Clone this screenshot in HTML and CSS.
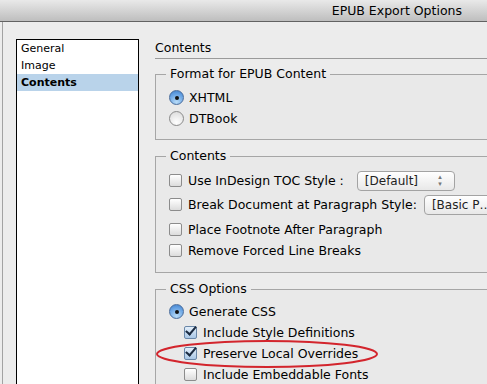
FILE: index.html
```html
<!DOCTYPE html>
<html lang="en">
<head>
  <meta charset="UTF-8">
  <title>EPUB Export Options</title>
  <link rel="stylesheet" href="styles.css">
</head>
<body>
  <div class="titlebar">EPUB Export Options</div>
  <div class="window">
    <ul class="sidebar">
      <li>General</li>
      <li>Image</li>
      <li class="active">Contents</li>
    </ul>

    <div class="panel">
      <div class="panel-title">Contents</div>

      <fieldset class="group group-format">
        <legend>Format for EPUB Content</legend>
        <div class="row"><span class="radio on"></span>XHTML</div>
        <div class="row"><span class="radio"></span>DTBook</div>
      </fieldset>

      <fieldset class="group group-contents">
        <legend>Contents</legend>
        <div class="row tall"><span class="check"></span>Use InDesign TOC Style :
          <span class="select select-toc">[Default]<span class="arrows">&#9652;<br>&#9662;</span></span>
        </div>
        <div class="row tall"><span class="check"></span>Break Document at Paragraph Style:
          <span class="select select-para">[Basic P…</span>
        </div>
        <div class="row"><span class="check"></span>Place Footnote After Paragraph</div>
        <div class="row"><span class="check"></span>Remove Forced Line Breaks</div>
      </fieldset>

      <fieldset class="group group-css">
        <legend>CSS Options</legend>
        <div class="row"><span class="radio on"></span>Generate CSS</div>
        <div class="row sub"><span class="check on"></span>Include Style Definitions</div>
        <div class="row sub"><span class="check on"></span>Preserve Local Overrides
          <svg class="mark" width="226" height="32" viewBox="0 0 226 32">
            <ellipse cx="113" cy="16" rx="110" ry="13" fill="none" stroke="#d3252d" stroke-width="2"/>
          </svg>
        </div>
        <div class="row sub"><span class="check"></span>Include Embeddable Fonts</div>
      </fieldset>
    </div>
  </div>
</body>
</html>
```

FILE: styles.css
```css
body {
  margin: 0;
  width: 487px;
  height: 384px;
  overflow: hidden;
  background: #ececec;
  font-family: "DejaVu Sans", sans-serif;
  font-size: 12.5px;
  color: #000;
}
.titlebar {
  height: 22px;
  line-height: 22px;
  padding-right: 25px;
  text-align: right;
  background: linear-gradient(#e9e9e9, #bebebe);
  border-bottom: 1px solid #626262;
  box-sizing: border-box;
}
.window {
  display: flex;
  align-items: flex-start;
  margin-left: 2px;
  border-left: 1px solid #a2a2a2;
  padding-top: 17px;
  height: 400px;
}
.sidebar {
  list-style: none;
  margin: 0 16px 0 13px;
  padding: 0;
  width: 121px;
  height: 400px;
  flex-shrink: 0;
  background: #fff;
  border: 1px solid #000;
  font-size: 11px;
}
.sidebar li {
  height: 17px;
  line-height: 17px;
  padding-left: 4px;
}
.sidebar li.active {
  background: #b9d3ea;
  font-weight: bold;
}
.panel {
  width: 360px;
  flex-shrink: 0;
}
.panel-title {
  height: 19px;
  line-height: 18px;
  border-bottom: 1px solid #9a9a9a;
}
.group {
  margin: 8px 0 0;
  padding: 4px 10px 10px 13px;
  border: 1px solid #a6a6a6;
  background: #e9e9e9;
}
.group legend {
  margin-left: -3px;
  padding: 0 4px;
  line-height: 16px;
}
.group-format {
  margin-top: 7px;
  padding-top: 5px;
}
.group-contents {
  padding-bottom: 11px;
}
.row {
  display: flex;
  align-items: center;
  height: 21px;
  white-space: nowrap;
  position: relative;
}
.row.tall {
  height: 24px;
}
.row.tall + .row:not(.tall) {
  margin-top: 3px;
}
.row.sub {
  padding-left: 15px;
}
.radio {
  width: 13px;
  height: 13px;
  margin-right: 5px;
  border: 1px solid #8a8a8a;
  border-radius: 50%;
  background: radial-gradient(circle at 50% 80%, #fff, #d8d8d8);
  flex-shrink: 0;
  position: relative;
}
.radio.on {
  border-color: #4a6d9c;
  background: radial-gradient(circle at 50% 85%, #b9dcf7, #5d9be0 70%, #3f7cc4);
}
.radio.on::after {
  content: "";
  position: absolute;
  left: 4.5px;
  top: 4.5px;
  width: 4px;
  height: 4px;
  border-radius: 50%;
  background: #111;
}
.check {
  width: 11px;
  height: 11px;
  margin-right: 6px;
  border: 1px solid #8c8c8c;
  border-radius: 2px;
  background: linear-gradient(#fff, #dcdcdc);
  flex-shrink: 0;
  position: relative;
}
.check.on {
  border-color: #6a87a8;
  background: linear-gradient(#e4effa, #a9c7e6);
}
.check.on::after {
  content: "";
  position: absolute;
  left: 3px;
  top: -3px;
  width: 4px;
  height: 9px;
  border: solid #1a2a40;
  border-width: 0 2px 2px 0;
  transform: rotate(40deg);
}
.select {
  display: inline-flex;
  align-items: center;
  position: relative;
  height: 20px;
  box-sizing: border-box;
  padding-left: 7px;
  border: 1px solid #a3a3a3;
  border-radius: 4px;
  background: linear-gradient(#fff, #e8e8e8);
  color: #222;
  font-size: 12px;
}
.select-toc {
  width: 98px;
  margin-left: 13px;
  margin-top: 2px;
}
.select-para {
  width: 80px;
  margin-left: 7px;
  margin-top: 2px;
}
.arrows {
  position: absolute;
  right: 12px;
  top: 2px;
  font-size: 7px;
  line-height: 7px;
  color: #777;
  text-align: center;
}
.mark {
  position: absolute;
  left: -15px;
  top: -5px;
}
```
